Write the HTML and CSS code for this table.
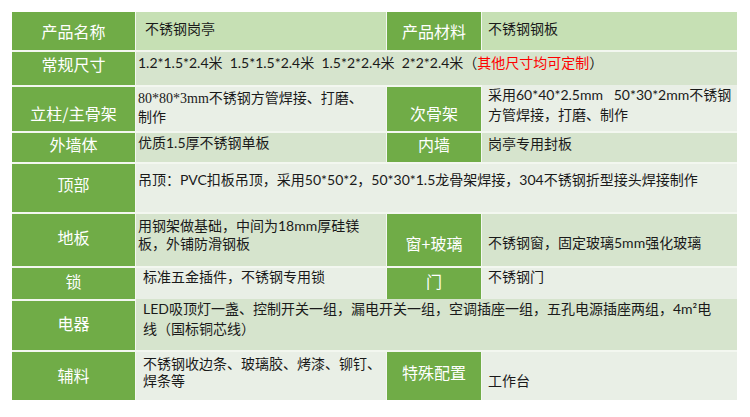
FILE: index.html
```html
<!DOCTYPE html>
<html lang="zh-CN">
<head>
<meta charset="utf-8">
<title>不锈钢岗亭参数</title>
<link rel="stylesheet" href="styles.css">
</head>
<body>
<div class="spec">
  <div class="lab r1">产品名称</div>
  <div class="val r1 pl9">不锈钢岗亭</div>
  <div class="lab r1">产品材料</div>
  <div class="val r1 pr">不锈钢钢板</div>

  <div class="lab r2">常规尺寸</div>
  <div class="val r2 span3">1.2*1.5*2.4米&nbsp;&nbsp;1.5*1.5*2.4米&nbsp;&nbsp;1.5*2*2.4米&nbsp;&nbsp;2*2*2.4米（<span class="red">其他尺寸均可定制</span>）</div>

  <div class="lab r3">立柱/主骨架</div>
  <div class="val r3"><span class="serif">80*80*3mm</span>不锈钢方管焊接、打磨、<br>制作</div>
  <div class="lab r3">次骨架</div>
  <div class="val r3b pr">采用60*40*2.5mm&nbsp;&nbsp;&nbsp;50*30*2mm不锈钢<br>方管焊接，打磨、制作</div>

  <div class="lab r4">外墙体</div>
  <div class="val r4">优质1.5厚不锈钢单板</div>
  <div class="lab r4">内墙</div>
  <div class="val r4b pr">岗亭专用封板</div>

  <div class="lab r5">顶部</div>
  <div class="val r5 span3">吊顶：PVC扣板吊顶，采用50*50*2，50*30*1.5龙骨架焊接，304不锈钢折型接头焊接制作</div>

  <div class="lab r6">地板</div>
  <div class="val r6">用钢架做基础，中间为18mm厚硅镁<br>板，外铺防滑钢板</div>
  <div class="lab r6b">窗+玻璃</div>
  <div class="val r6b pr">不锈钢窗，固定玻璃5mm强化玻璃</div>

  <div class="lab r7">锁</div>
  <div class="val r7 pl7">标准五金插件，不锈钢专用锁</div>
  <div class="lab r7">门</div>
  <div class="val r7 pr">不锈钢门</div>

  <div class="lab r8">电器</div>
  <div class="val r8 span3 pl7">LED吸顶灯一盏、控制开关一组，漏电开关一组，空调插座一组，五孔电源插座两组，4m²电<br>线（国标铜芯线）</div>

  <div class="lab r9">辅料</div>
  <div class="val r9 pl7">不锈钢收边条、玻璃胶、烤漆、铆钉、<br>焊条等</div>
  <div class="lab r9b">特殊配置</div>
  <div class="val r9b pr">工作台</div>
</div>
</body>
</html>
```

FILE: styles.css
```css
html, body {
  margin: 0;
  padding: 0;
  background: #ffffff;
}

.spec {
  margin: 12px 0 0 12px;
  width: 725px;
  display: grid;
  grid-template-columns: 123px 250px 94px 255px;
  grid-template-rows: 38px 33px 44px 29px 48px 52px 31px 49px 48px;
  column-gap: 1px;
  row-gap: 2px;
  background: #f3f7f0;
}

.lab {
  background: #70ac47;
  color: #ffffff;
  font-family: "Noto Sans CJK SC", sans-serif;
  font-size: 16px;
  line-height: 20px;
  text-align: center;
  box-sizing: border-box;
}

.val {
  font-family: "Lato", "Noto Sans CJK SC", sans-serif;
  font-size: 14px;
  line-height: 18px;
  color: #1a1a1a;
  box-sizing: border-box;
  padding-left: 2px;
  white-space: nowrap;
  overflow: hidden;
}

.span3 { grid-column: 2 / 5; }
.pl9 { padding-left: 9px; }
.pl7 { padding-left: 7px; }
.pr { padding-left: 6px; }

.red { color: #ff0000; }
.serif { font-family: "Liberation Serif", "Noto Sans CJK SC", serif; }

/* row backgrounds */
.val.r1 { background: #c6e0b4; }
.val.r2, .val.r4, .val.r4b, .val.r6, .val.r6b, .val.r8 { background: #d6e4cd; }
.val.r3, .val.r3b, .val.r5, .val.r7, .val.r9, .val.r9b { background: #e9efe6; }

/* vertical placement per row */
.lab.r1 { padding-top: 9px; }
.lab.r2 { padding-top: 2px; }
.lab.r3 { padding-top: 16px; }
.lab.r4 { padding-top: 1px; }
.lab.r5 { padding-top: 10px; }
.lab.r6 { padding-top: 13px; }
.lab.r6b { padding-top: 19px; }
.lab.r7 { padding-top: 3px; }
.lab.r8 { padding-top: 12px; }
.lab.r9 { padding-top: 13px; }
.lab.r9b { padding-top: 10px; }

.val.r1 { padding-top: 8px; }
.val.r2 { padding-top: 2px; }
.val.r3 { padding-top: 2px; line-height: 18px; }
.val.r3b { padding-top: 0; line-height: 20px; margin-top: -2px; padding-bottom: 2px; }
.val.r4 { padding-top: 1px; }
.val.r4b { padding-top: 2px; }
.val.r5 { padding-top: 7px; }
.val.r6 { padding-top: 3px; }
.val.r6b { padding-top: 20px; }
.val.r7 { padding-top: 0; }
.val.r8 { padding-top: 0; line-height: 20px; margin-top: -2px; padding-bottom: 2px; }
.val.r9 { padding-top: 3px; line-height: 17px; }
.val.r9b { padding-top: 20px; }
```
